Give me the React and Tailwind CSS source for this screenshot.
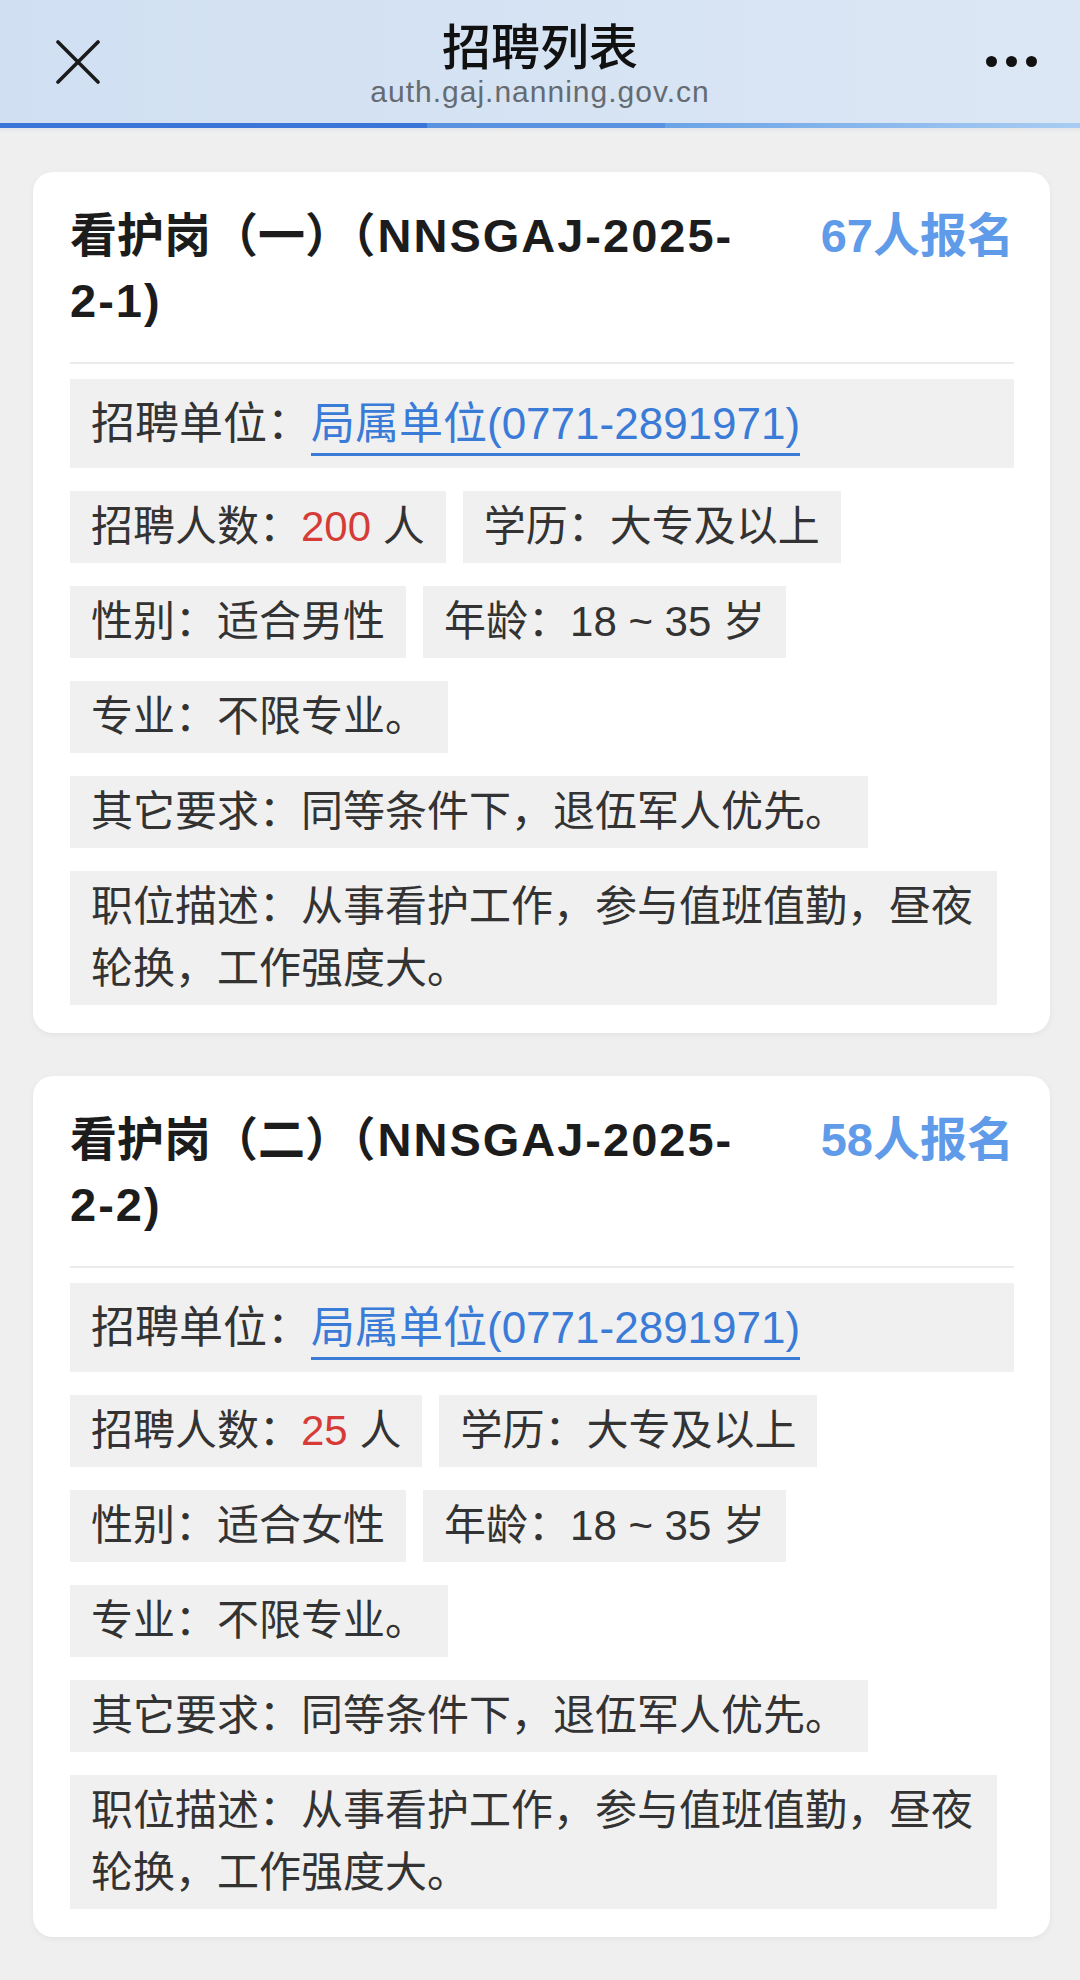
import React from 'react';

const jobs = [
  {
    id: 1,
    cn: '看护岗（一）',
    codeTop: '（NNSGAJ-2025-',
    codeBottom: '2-1)',
    applied: 67,
    count: 200,
    gender: '适合男性',
  },
  {
    id: 2,
    cn: '看护岗（二）',
    codeTop: '（NNSGAJ-2025-',
    codeBottom: '2-2)',
    applied: 58,
    count: 25,
    gender: '适合女性',
  },
];

const font = "font-['Liberation_Sans','Noto_Sans_CJK_SC',sans-serif]";

function Tag({ children }) {
  return (
    <div className="mr-[17px] bg-[#f0f0f0] px-[21px] py-[5px] text-[42px] leading-[62px] text-[#333]">
      {children}
    </div>
  );
}

function JobCard({ job }) {
  return (
    <div className="rounded-[20px] bg-white pt-[31px] pr-[36px] pb-[28px] pl-[37px] shadow-[0_2px_6px_rgba(0,0,0,0.05)]">
      <div className="flex items-start">
        <h2 className="flex-1 text-[47px] font-bold leading-[65px] text-[#1c1c1c]">
          {job.cn}
          <span className="tracking-[2px]">{job.codeTop}</span>
          <br />
          <span className="tracking-[2px]">{job.codeBottom}</span>
        </h2>
        <span className="ml-[20px] whitespace-nowrap text-[47px] font-bold leading-[65px] text-[#5f9be8]">
          {job.applied}人报名
        </span>
      </div>

      <div className="mt-[29px] h-[2px] bg-[#ebebeb]" />

      <div className="mt-[15px] bg-[#f0f0f0] px-[21px] py-[13px] text-[44px] leading-[63px] text-[#333]">
        招聘单位：
        <span className="border-b-[3px] border-[#3b7bd8] pb-[5px] text-[#3b7bd8]">
          局属单位(0771-2891971)
        </span>
      </div>

      <div className="mt-[23px] flex flex-wrap gap-y-[23px]">
        <Tag>
          招聘人数：<span className="text-[#d63c37]">{job.count}</span> 人
        </Tag>
        <Tag>学历：大专及以上</Tag>
        <Tag>性别：{job.gender}</Tag>
        <Tag>年龄：18 ~ 35 岁</Tag>
        <Tag>专业：不限专业。</Tag>
        <Tag>其它要求：同等条件下，退伍军人优先。</Tag>
        <Tag>职位描述：从事看护工作，参与值班值勤，昼夜轮换，工作强度大。</Tag>
      </div>
    </div>
  );
}

export default function App() {
  return (
    <div className={`h-[1980px] overflow-hidden bg-[#efefef] ${font}`}>
      <header className="flex h-[123px] items-center bg-linear-to-r from-[#d0dff2] to-[#dce7f4]">
        <div className="flex w-[200px] pl-[56px]">
          <svg width="44" height="44" viewBox="0 0 44 44" fill="none">
            <path d="M2 2L42 42M42 2L2 42" stroke="#1a1a1a" strokeWidth="3.6" strokeLinecap="round" />
          </svg>
        </div>
        <div className="flex flex-1 flex-col items-center pt-[4px]">
          <h1 className="text-[49px] font-medium leading-[56px] text-[#111]">招聘列表</h1>
          <p className="text-[30px] leading-[32px] tracking-[1px] text-[#656b72]">
            auth.gaj.nanning.gov.cn
          </p>
        </div>
        <div className="flex w-[200px] justify-end gap-[9px] pr-[43px]">
          <span className="h-[11px] w-[11px] rounded-full bg-[#111]" />
          <span className="h-[11px] w-[11px] rounded-full bg-[#111]" />
          <span className="h-[11px] w-[11px] rounded-full bg-[#111]" />
        </div>
      </header>

      <div className="flex h-[5px]">
        <div className="w-[427px] bg-[#3b75d8]" />
        <div className="w-[238px] bg-[#5892e0]" />
        <div className="flex-1 bg-linear-to-r from-[#6aa3e6] to-[#a9cdf2]" />
      </div>
      <div className="h-[5px] bg-linear-to-b from-[#e4e6e9] to-[#efefef]" />

      <main className="flex flex-col gap-[43px] pt-[39px] pr-[30px] pl-[33px]">
        {jobs.map((job) => (
          <JobCard key={job.id} job={job} />
        ))}
        <div className="h-[60px] rounded-t-[20px] bg-white" />
      </main>
    </div>
  );
}
